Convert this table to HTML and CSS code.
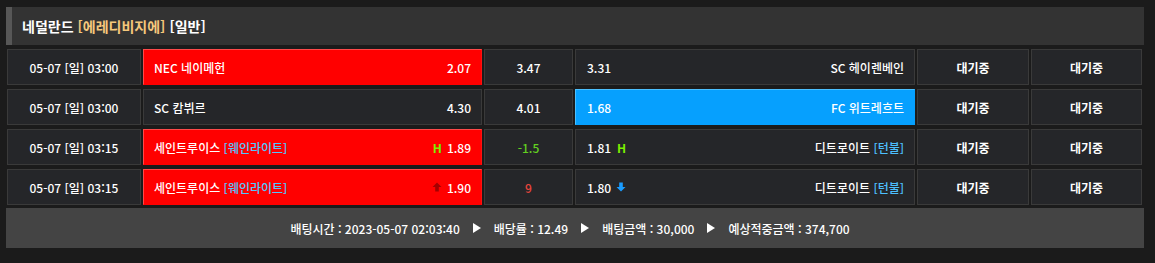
FILE: index.html
```html
<!DOCTYPE html>
<html lang="ko">
<head>
<meta charset="utf-8">
<link rel="stylesheet" href="styles.css">
</head>
<body>
<div class="panel">
  <div class="title">네덜란드 <span class="league">[에레디비지에]</span> [일반]</div>
  <div class="rows">
    <div class="row">
      <div class="cell date">05-07 [일] 03:00</div>
      <div class="cell team home sel-red"><span class="name">NEC 네이메헌</span><span class="odd">2.07</span></div>
      <div class="cell draw">3.47</div>
      <div class="cell team away"><span class="odd">3.31</span><span class="name">SC 헤이렌베인</span></div>
      <div class="cell status">대기중</div>
      <div class="cell status">대기중</div>
    </div>
    <div class="row">
      <div class="cell date">05-07 [일] 03:00</div>
      <div class="cell team home"><span class="name">SC 캄뷔르</span><span class="odd">4.30</span></div>
      <div class="cell draw">4.01</div>
      <div class="cell team away sel-blue"><span class="odd">1.68</span><span class="name">FC 위트레흐트</span></div>
      <div class="cell status">대기중</div>
      <div class="cell status">대기중</div>
    </div>
    <div class="row">
      <div class="cell date">05-07 [일] 03:15</div>
      <div class="cell team home sel-red"><span class="name">세인트루이스 <span class="tag">[웨인라이트]</span></span><span class="odd"><span class="h">H</span>1.89</span></div>
      <div class="cell draw green">-1.5</div>
      <div class="cell team away"><span class="odd">1.81<span class="h">H</span></span><span class="name">디트로이트 <span class="tag">[턴불]</span></span></div>
      <div class="cell status">대기중</div>
      <div class="cell status">대기중</div>
    </div>
    <div class="row">
      <div class="cell date">05-07 [일] 03:15</div>
      <div class="cell team home sel-red"><span class="name">세인트루이스 <span class="tag">[웨인라이트]</span></span><span class="odd"><svg class="arrow" width="10" height="10" viewBox="0 0 10 10"><path d="M5 0.5 L9.5 5 L6.8 5 L6.8 9.5 L3.2 9.5 L3.2 5 L0.5 5 Z" fill="#a30000"/></svg>1.90</span></div>
      <div class="cell draw red">9</div>
      <div class="cell team away"><span class="odd">1.80<svg class="arrow after" width="10" height="10" viewBox="0 0 10 10"><path d="M5 9.5 L9.5 5 L6.8 5 L6.8 0.5 L3.2 0.5 L3.2 5 L0.5 5 Z" fill="#1a9cff"/></svg></span><span class="name">디트로이트 <span class="tag">[턴불]</span></span></div>
      <div class="cell status">대기중</div>
      <div class="cell status">대기중</div>
    </div>
  </div>
  <div class="summary">
    <span>배팅시간 : 2023-05-07 02:03:40</span>
    <svg class="tri" width="8" height="10" viewBox="0 0 8 10"><path d="M0 0 L8 5 L0 10 Z" fill="#fff"/></svg>
    <span>배당률 : 12.49</span>
    <svg class="tri" width="8" height="10" viewBox="0 0 8 10"><path d="M0 0 L8 5 L0 10 Z" fill="#fff"/></svg>
    <span>배팅금액 : 30,000</span>
    <svg class="tri" width="8" height="10" viewBox="0 0 8 10"><path d="M0 0 L8 5 L0 10 Z" fill="#fff"/></svg>
    <span>예상적중금액 : 374,700</span>
  </div>
</div>
</body>
</html>
```
FILE: styles.css
```css
html, body {
  margin: 0;
  background: #1b1b1b;
}
body {
  font-family: "Noto Sans CJK KR", "Noto Sans", sans-serif;
  font-size: 12px;
  font-weight: 500;
  color: #fff;
}
.panel {
  padding: 7px 11px 0 6px;
  width: 1138px;
}
.title {
  height: 38px;
  background: #333333;
  border-left: 6px solid #575757;
  box-sizing: border-box;
  padding-left: 10px;
  display: flex;
  align-items: center;
  font-size: 14px;
  font-weight: bold;
  color: #fff;
  gap: 4px;
}
.title .league {
  color: #f5c87c;
}
.rows {
  display: flex;
  flex-direction: column;
  gap: 4px;
  margin-top: 4px;
  padding-left: 1px;
}
.row {
  display: grid;
  grid-template-columns: 134px 339px 89px 340px 112px 111px;
  column-gap: 2px;
  height: 36px;
}
.cell {
  background: #252629;
  border: 1px solid #3a3a3a;
  box-sizing: border-box;
  display: flex;
  align-items: center;
  color: #fff;
}
.date, .draw, .status {
  justify-content: center;
}
.status {
  font-weight: 700;
}
.team {
  justify-content: space-between;
  padding: 0 10px;
}
.away {
  padding-left: 11px;
}
.odd {
  display: flex;
  align-items: center;
}
.h {
  color: #7cf000;
  font-weight: bold;
  margin-right: 5px;
}
.away .h {
  margin-right: 0;
  margin-left: 6px;
}
.arrow {
  margin-right: 5px;
}
.arrow.after {
  margin-right: 0;
  margin-left: 5px;
}
.sel-red {
  background: #ff0000;
  border-color: #ff4a4a #ff1010 #ff0000 #ff4a4a;
}
.sel-blue {
  background: #06a0fe;
  border-color: #4cc0ff #06a0fe #06a0fe #4cc0ff;
}
.tag {
  color: #4dc0ff;
}
.sel-red .tag {
  color: #52c6ff;
}
.green {
  color: #62d020;
}
.red {
  color: #e8453c;
}
.summary {
  margin-top: 3px;
  height: 40px;
  background: #444444;
  display: flex;
  align-items: center;
  justify-content: center;
  gap: 11px;
  padding-right: 10px;
  font-size: 12px;
  color: #fff;
}
.tri {
  margin: 0 2px;
}
```
